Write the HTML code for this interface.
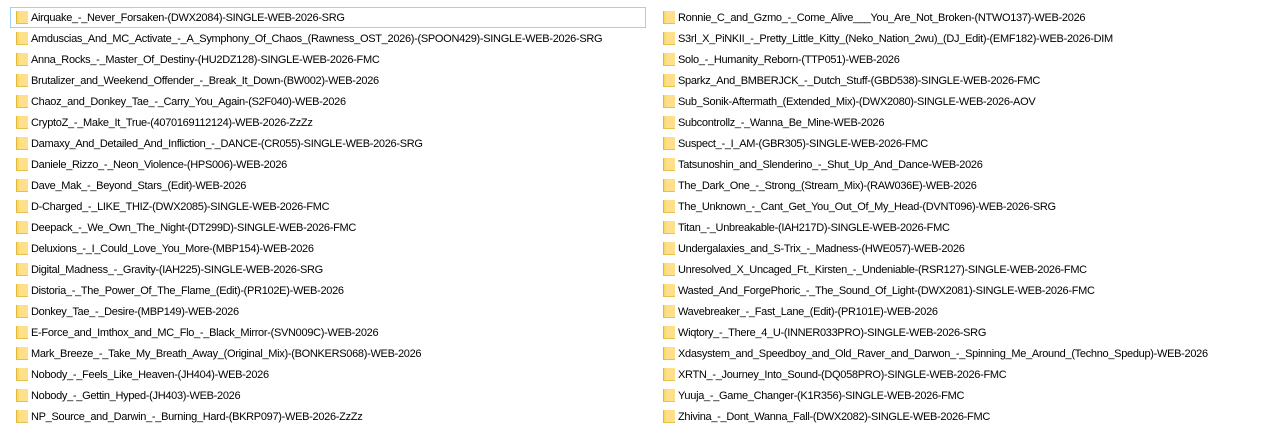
<!DOCTYPE html><html><head><style>
body{margin:0;width:1274px;height:432px;background:#fff;font-family:"Liberation Sans",sans-serif;font-size:11px;letter-spacing:-0.3px;color:#000;position:relative;overflow:hidden}
.c{position:absolute;top:7px;width:630px}
.r{height:21px;line-height:21px;position:relative;white-space:nowrap;width:630px}
.r i{position:absolute;left:6px;top:4px;width:11px;height:12px;background:#fcd866;border-left:1px solid #e0b840;border-bottom:1px solid #e8c050}
.r b{position:absolute;left:9px;top:4px;width:9px;height:12px;background:#ffe08a}
.r span{position:absolute;left:21px;top:1px}
.sel{outline:1px solid #99d1ff;outline-offset:-1px;width:636px}
</style></head><body>
<div class="c" style="left:10px">
<div class="r sel"><i></i><b></b><span>Airquake_-_Never_Forsaken-(DWX2084)-SINGLE-WEB-2026-SRG</span></div>
<div class="r"><i></i><b></b><span>Amduscias_And_MC_Activate_-_A_Symphony_Of_Chaos_(Rawness_OST_2026)-(SPOON429)-SINGLE-WEB-2026-SRG</span></div>
<div class="r"><i></i><b></b><span>Anna_Rocks_-_Master_Of_Destiny-(HU2DZ128)-SINGLE-WEB-2026-FMC</span></div>
<div class="r"><i></i><b></b><span>Brutalizer_and_Weekend_Offender_-_Break_It_Down-(BW002)-WEB-2026</span></div>
<div class="r"><i></i><b></b><span>Chaoz_and_Donkey_Tae_-_Carry_You_Again-(S2F040)-WEB-2026</span></div>
<div class="r"><i></i><b></b><span>CryptoZ_-_Make_It_True-(4070169112124)-WEB-2026-ZzZz</span></div>
<div class="r"><i></i><b></b><span>Damaxy_And_Detailed_And_Infliction_-_DANCE-(CR055)-SINGLE-WEB-2026-SRG</span></div>
<div class="r"><i></i><b></b><span>Daniele_Rizzo_-_Neon_Violence-(HPS006)-WEB-2026</span></div>
<div class="r"><i></i><b></b><span>Dave_Mak_-_Beyond_Stars_(Edit)-WEB-2026</span></div>
<div class="r"><i></i><b></b><span>D-Charged_-_LIKE_THIZ-(DWX2085)-SINGLE-WEB-2026-FMC</span></div>
<div class="r"><i></i><b></b><span>Deepack_-_We_Own_The_Night-(DT299D)-SINGLE-WEB-2026-FMC</span></div>
<div class="r"><i></i><b></b><span>Deluxions_-_I_Could_Love_You_More-(MBP154)-WEB-2026</span></div>
<div class="r"><i></i><b></b><span>Digital_Madness_-_Gravity-(IAH225)-SINGLE-WEB-2026-SRG</span></div>
<div class="r"><i></i><b></b><span>Distoria_-_The_Power_Of_The_Flame_(Edit)-(PR102E)-WEB-2026</span></div>
<div class="r"><i></i><b></b><span>Donkey_Tae_-_Desire-(MBP149)-WEB-2026</span></div>
<div class="r"><i></i><b></b><span>E-Force_and_Imthox_and_MC_Flo_-_Black_Mirror-(SVN009C)-WEB-2026</span></div>
<div class="r"><i></i><b></b><span>Mark_Breeze_-_Take_My_Breath_Away_(Original_Mix)-(BONKERS068)-WEB-2026</span></div>
<div class="r"><i></i><b></b><span>Nobody_-_Feels_Like_Heaven-(JH404)-WEB-2026</span></div>
<div class="r"><i></i><b></b><span>Nobody_-_Gettin_Hyped-(JH403)-WEB-2026</span></div>
<div class="r"><i></i><b></b><span>NP_Source_and_Darwin_-_Burning_Hard-(BKRP097)-WEB-2026-ZzZz</span></div>
</div>
<div class="c" style="left:657px">
<div class="r"><i></i><b></b><span>Ronnie_C_and_Gzmo_-_Come_Alive___You_Are_Not_Broken-(NTWO137)-WEB-2026</span></div>
<div class="r"><i></i><b></b><span>S3rl_X_PiNKII_-_Pretty_Little_Kitty_(Neko_Nation_2wu)_(DJ_Edit)-(EMF182)-WEB-2026-DIM</span></div>
<div class="r"><i></i><b></b><span>Solo_-_Humanity_Reborn-(TTP051)-WEB-2026</span></div>
<div class="r"><i></i><b></b><span>Sparkz_And_BMBERJCK_-_Dutch_Stuff-(GBD538)-SINGLE-WEB-2026-FMC</span></div>
<div class="r"><i></i><b></b><span>Sub_Sonik-Aftermath_(Extended_Mix)-(DWX2080)-SINGLE-WEB-2026-AOV</span></div>
<div class="r"><i></i><b></b><span>Subcontrollz_-_Wanna_Be_Mine-WEB-2026</span></div>
<div class="r"><i></i><b></b><span>Suspect_-_I_AM-(GBR305)-SINGLE-WEB-2026-FMC</span></div>
<div class="r"><i></i><b></b><span>Tatsunoshin_and_Slenderino_-_Shut_Up_And_Dance-WEB-2026</span></div>
<div class="r"><i></i><b></b><span>The_Dark_One_-_Strong_(Stream_Mix)-(RAW036E)-WEB-2026</span></div>
<div class="r"><i></i><b></b><span>The_Unknown_-_Cant_Get_You_Out_Of_My_Head-(DVNT096)-WEB-2026-SRG</span></div>
<div class="r"><i></i><b></b><span>Titan_-_Unbreakable-(IAH217D)-SINGLE-WEB-2026-FMC</span></div>
<div class="r"><i></i><b></b><span>Undergalaxies_and_S-Trix_-_Madness-(HWE057)-WEB-2026</span></div>
<div class="r"><i></i><b></b><span>Unresolved_X_Uncaged_Ft._Kirsten_-_Undeniable-(RSR127)-SINGLE-WEB-2026-FMC</span></div>
<div class="r"><i></i><b></b><span>Wasted_And_ForgePhoric_-_The_Sound_Of_Light-(DWX2081)-SINGLE-WEB-2026-FMC</span></div>
<div class="r"><i></i><b></b><span>Wavebreaker_-_Fast_Lane_(Edit)-(PR101E)-WEB-2026</span></div>
<div class="r"><i></i><b></b><span>Wiqtory_-_There_4_U-(INNER033PRO)-SINGLE-WEB-2026-SRG</span></div>
<div class="r"><i></i><b></b><span>Xdasystem_and_Speedboy_and_Old_Raver_and_Darwon_-_Spinning_Me_Around_(Techno_Spedup)-WEB-2026</span></div>
<div class="r"><i></i><b></b><span>XRTN_-_Journey_Into_Sound-(DQ058PRO)-SINGLE-WEB-2026-FMC</span></div>
<div class="r"><i></i><b></b><span>Yuuja_-_Game_Changer-(K1R356)-SINGLE-WEB-2026-FMC</span></div>
<div class="r"><i></i><b></b><span>Zhivina_-_Dont_Wanna_Fall-(DWX2082)-SINGLE-WEB-2026-FMC</span></div>
</div>
</body></html>
